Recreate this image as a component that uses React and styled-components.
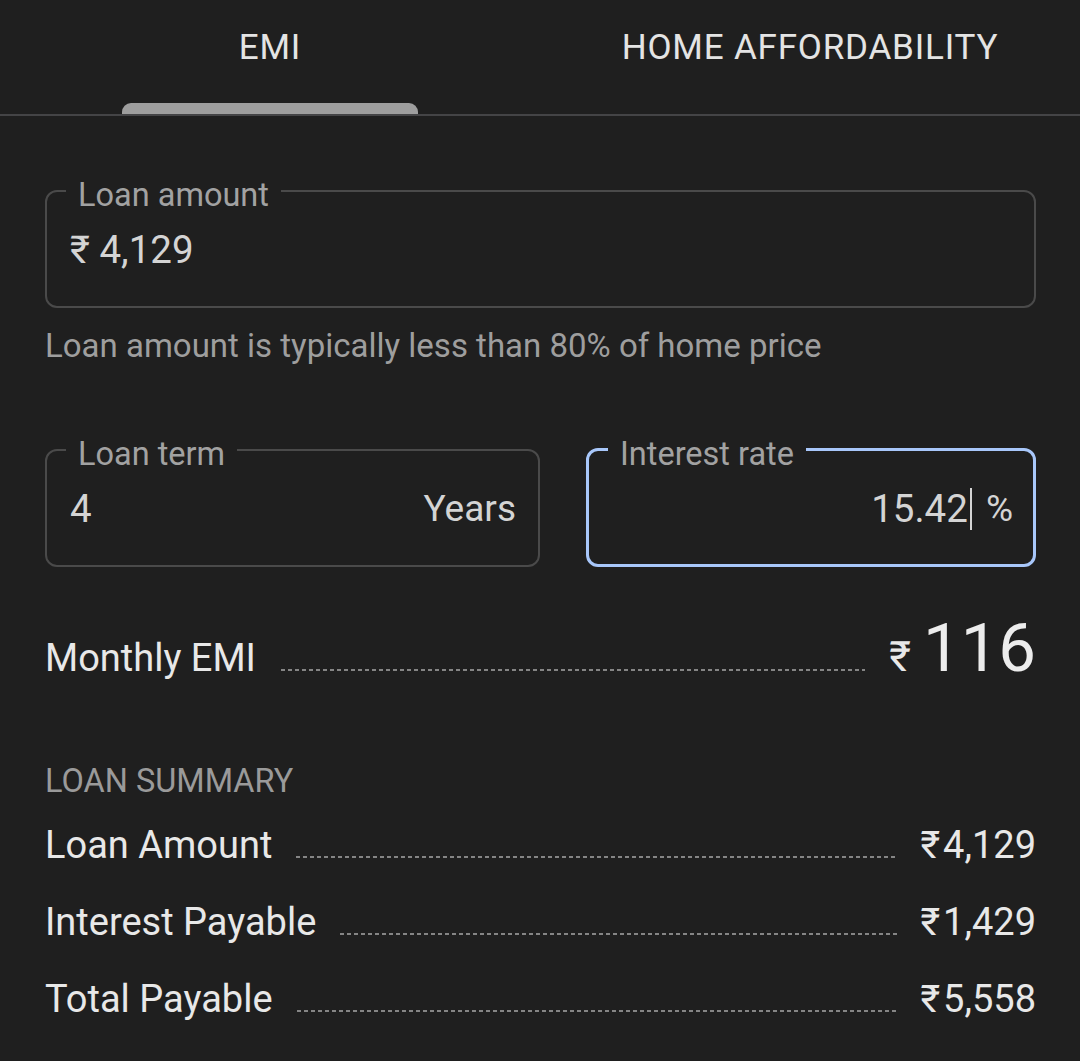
import React from 'react'
import styled, { createGlobalStyle } from 'styled-components'

const GlobalStyle = createGlobalStyle`
  html, body {
    margin: 0;
    padding: 0;
    background: #1f1f1f;
  }
  body {
    font-family: Roboto, 'Noto Sans', sans-serif;
    color: #e6e6e6;
  }
`

const Page = styled.div`
  width: 1080px;
  min-height: 1061px;
  background: #1f1f1f;
`

const TabBar = styled.div`
  display: grid;
  grid-template-columns: 1fr 1fr;
  height: 114px;
  border-bottom: 2px solid #444446;
`

const Tab = styled.div`
  display: flex;
  flex-direction: column;
  align-items: center;
  padding-top: 30px;
  font-size: 35px;
  line-height: 1;
  letter-spacing: 0.8px;
  color: #e4e4e4;
`

const Indicator = styled.div`
  margin-top: auto;
  width: 296px;
  height: 11px;
  background: #9e9e9e;
  border-radius: 9px 9px 0 0;
  visibility: ${p => (p.active ? 'visible' : 'hidden')};
`

const Content = styled.div`
  padding: 55px 44px 0 45px;
`

const Field = styled.fieldset`
  margin: 0;
  min-width: 0;
  padding: 0 ${p => (p.focused ? 20 : 22)}px 18px 21px;
  border: ${p => (p.focused ? '3px solid #a8c7fa' : '2px solid #4a4a4a')};
  border-radius: 12px;
`

const Legend = styled.legend`
  margin-left: -2px;
  padding: 8px 12px 0;
  font-size: 32.5px;
  line-height: 1;
  color: #a2a2a2;
`

const FieldRow = styled.div`
  display: flex;
  align-items: center;
  justify-content: ${p => (p.end ? 'flex-end' : 'space-between')};
  height: 76px;
  padding-left: 2px;
  font-size: 38.5px;
  color: #d4d4d4;
`

const Unit = styled.span`
  font-size: 37px;
`

const Caret = styled.span`
  display: inline-block;
  width: 2px;
  height: 42px;
  margin-left: 2px;
  background: #d4d4d4;
  vertical-align: -8px;
`

const Suffix = styled.span`
  margin-left: 14px;
  font-size: 37px;
`

const Helper = styled.div`
  margin-top: 18px;
  font-size: 33px;
  line-height: 40px;
  color: #9e9e9e;
`

const TwoFields = styled.div`
  display: grid;
  grid-template-columns: 495px 1fr;
  gap: 46px;
  margin-top: 64px;
`

const DotRow = styled.div`
  display: flex;
  align-items: baseline;
  color: #e8e8e8;
  font-size: 38px;
  line-height: 77px;
`

const Dots = styled.div`
  flex: 1;
  height: 2px;
  margin: 0 ${p => p.right || 23}px 0 ${p => p.left || 24}px;
  background-image: repeating-linear-gradient(
    to right,
    #858585 0,
    #858585 4px,
    transparent 4px,
    transparent 7px
  );
`

const EmiRow = styled(DotRow)`
  margin-top: 48px;
  line-height: 66px;
`

const Rupee = styled.span`
  font-size: ${p => p.size || 38}px;
  margin-right: ${p => p.gap || 0}px;
`

const BigValue = styled.span`
  font-size: 67px;
  line-height: 66px;
  color: #ececec;
`

const SectionTitle = styled.div`
  margin-top: 70px;
  font-size: 32.5px;
  line-height: 40px;
  color: #9a9a9a;
`

const Summary = styled.div`
  margin-top: 6px;
`

const summary = [
  { label: 'Loan Amount', value: '4,129' },
  { label: 'Interest Payable', value: '1,429' },
  { label: 'Total Payable', value: '5,558' },
]

const App = () => {
  return (
    <Page>
      <GlobalStyle />
      <TabBar>
        <Tab>
          EMI
          <Indicator active />
        </Tab>
        <Tab>
          HOME AFFORDABILITY
          <Indicator />
        </Tab>
      </TabBar>
      <Content>
        <Field>
          <Legend>Loan amount</Legend>
          <FieldRow>
            <span>₹&nbsp;4,129</span>
          </FieldRow>
        </Field>
        <Helper>Loan amount is typically less than 80% of home price</Helper>

        <TwoFields>
          <Field>
            <Legend>Loan term</Legend>
            <FieldRow>
              <span>4</span>
              <Unit>Years</Unit>
            </FieldRow>
          </Field>
          <Field focused>
            <Legend>Interest rate</Legend>
            <FieldRow end>
              <span>
                15.42
                <Caret />
              </span>
              <Suffix>%</Suffix>
            </FieldRow>
          </Field>
        </TwoFields>

        <EmiRow>
          <span>Monthly EMI</span>
          <Dots left={25} right={24} />
          <Rupee size={42} gap={12}>₹</Rupee>
          <BigValue>116</BigValue>
        </EmiRow>

        <SectionTitle>LOAN SUMMARY</SectionTitle>
        <Summary>
          {summary.map(row => (
            <DotRow key={row.label}>
              <span>{row.label}</span>
              <Dots />
              <Rupee gap={3}>₹</Rupee>
              <span>{row.value}</span>
            </DotRow>
          ))}
        </Summary>
      </Content>
    </Page>
  )
}

export default App
